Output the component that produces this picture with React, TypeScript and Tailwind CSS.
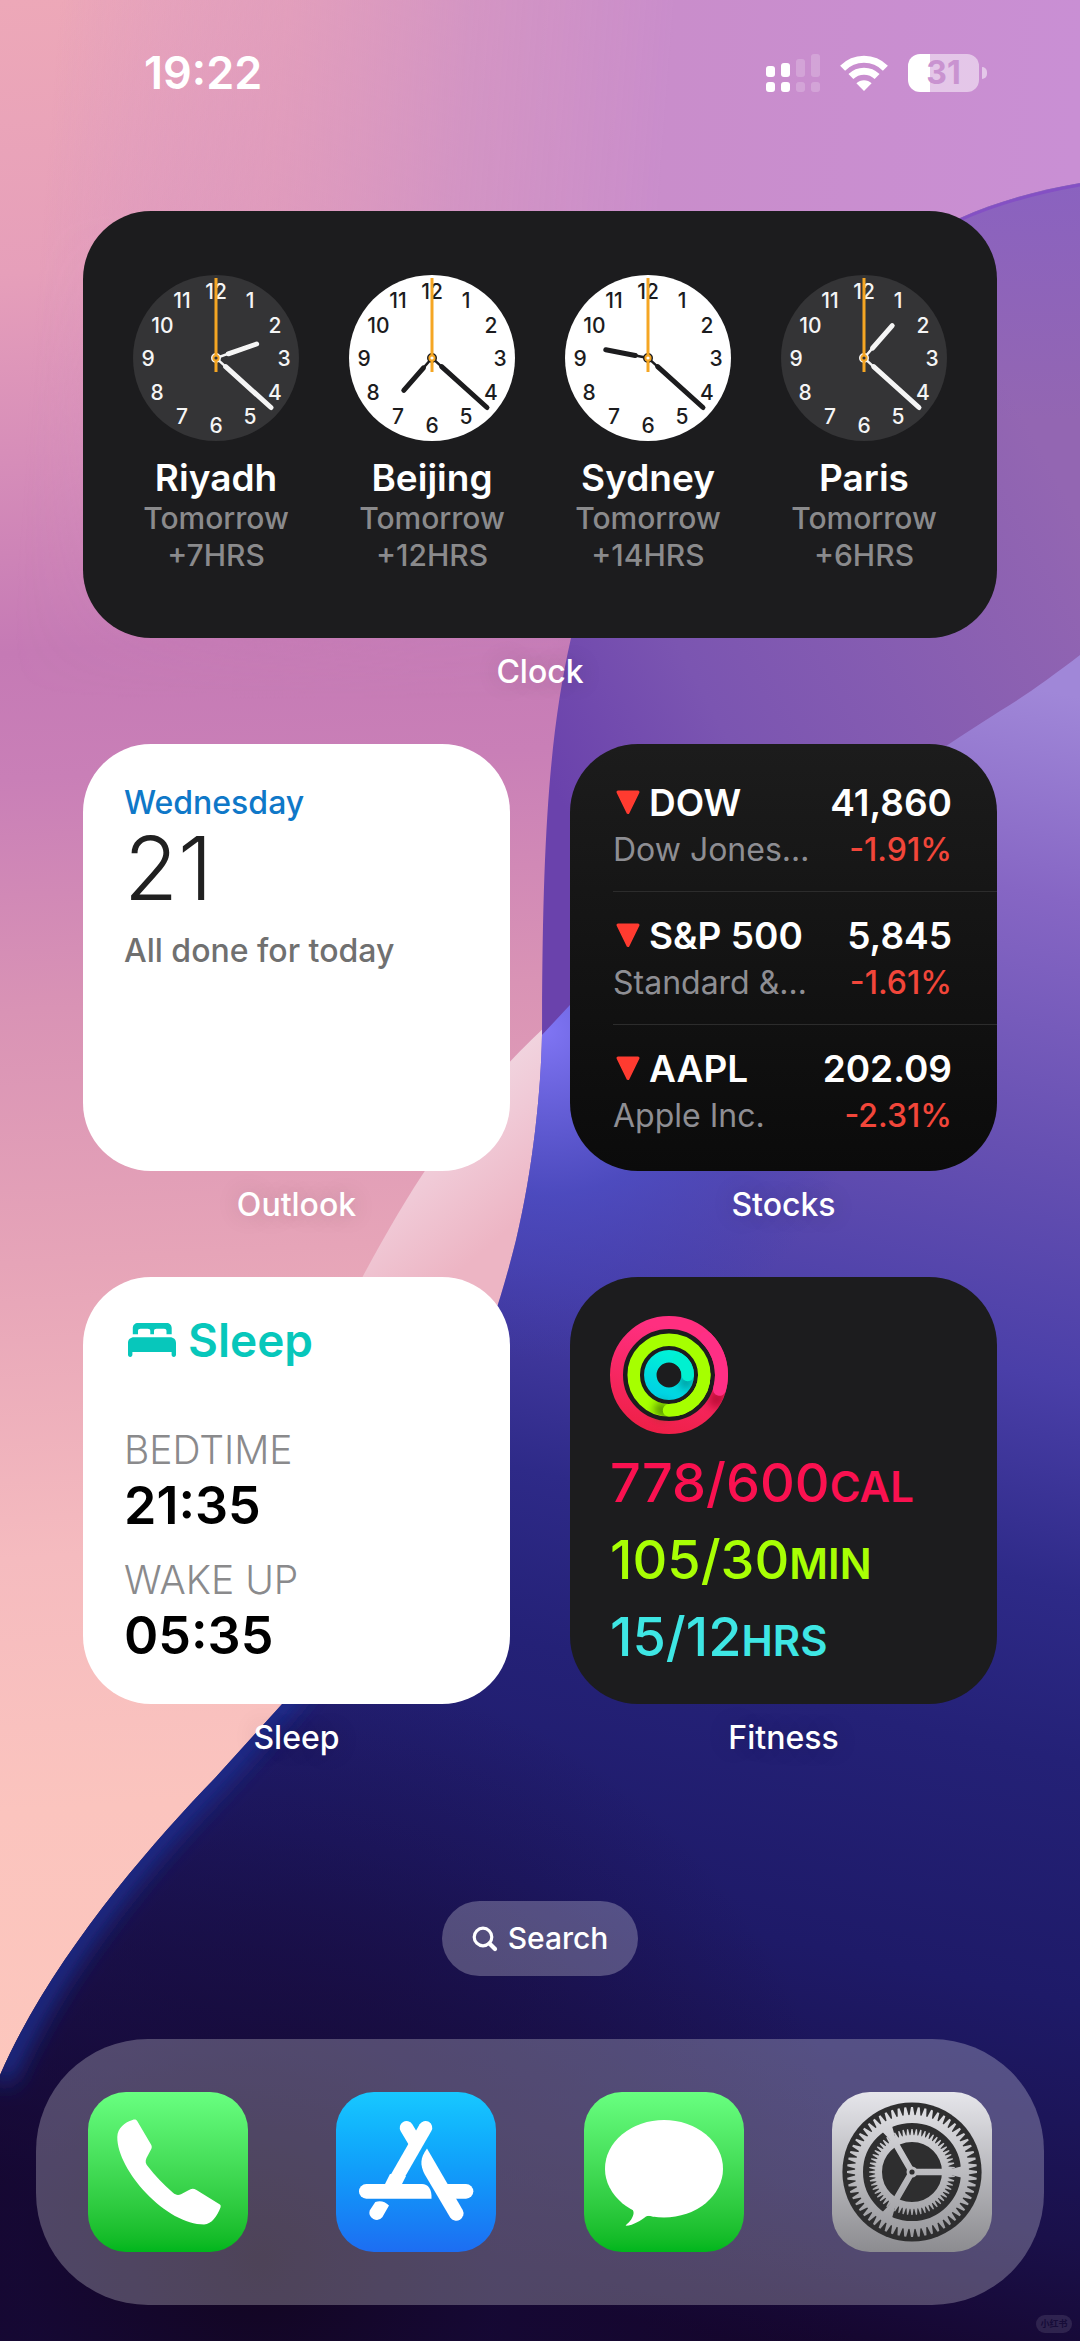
import type { ReactNode } from 'react'

type City = { name: string; offset: string; hour: number; night: boolean }

type Stock = { symbol: string; name: string; price: string; change: string }

const MINUTE = 22

const cities: City[] = [
  { name: 'Riyadh',  offset: '+7HRS',  hour: 2, night: true },
  { name: 'Beijing', offset: '+12HRS', hour: 7, night: false },
  { name: 'Sydney',  offset: '+14HRS', hour: 9, night: false },
  { name: 'Paris',   offset: '+6HRS',  hour: 1, night: true },
]

const stocks: Stock[] = [
  { symbol: 'DOW',     name: 'Dow Jones…',  price: '41,860', change: '-1.91%' },
  { symbol: 'S&P 500', name: 'Standard &…', price: '5,845',  change: '-1.61%' },
  { symbol: 'AAPL',    name: 'Apple Inc.',  price: '202.09', change: '-2.31%' },
]

const goals = [
  { value: '778/600', unit: 'CAL', color: 'text-[#fa1150]' },
  { value: '105/30',  unit: 'MIN', color: 'text-[#a8ff04]' },
  { value: '15/12',   unit: 'HRS', color: 'text-[#3ee6e4]' },
]

const range = (n: number) => Array.from({ length: n }, (_, i) => i)

function Wallpaper() {
  return (
    <svg
      className="absolute inset-0 h-full w-full"
      viewBox="0 0 1080 2341"
      preserveAspectRatio="none"
      aria-hidden="true"
    >
      <defs>
        <linearGradient id="pink" gradientUnits="userSpaceOnUse" x1="0" y1="0" x2="120" y2="2100">
          <stop offset="0" stopColor="#eda8b8" />
          <stop offset="0.13" stopColor="#e69fba" />
          <stop offset="0.22" stopColor="#d68db9" />
          <stop offset="0.31" stopColor="#c57ab5" />
          <stop offset="0.37" stopColor="#c97fb7" />
          <stop offset="0.48" stopColor="#d993b5" />
          <stop offset="0.6" stopColor="#e6a4b8" />
          <stop offset="0.74" stopColor="#f5bbbf" />
          <stop offset="0.86" stopColor="#fbc4be" />
          <stop offset="1" stopColor="#fdc7bd" />
        </linearGradient>
        <linearGradient id="orchid" gradientUnits="userSpaceOnUse" x1="60" y1="0" x2="1080" y2="80">
          <stop offset="0" stopColor="#c98dd0" stopOpacity="0" />
          <stop offset="0.22" stopColor="#d896c0" stopOpacity="0.5" />
          <stop offset="0.4" stopColor="#cf92c5" stopOpacity="0.85" />
          <stop offset="0.6" stopColor="#c98dcb" />
          <stop offset="1" stopColor="#c98fd4" />
        </linearGradient>
        <linearGradient id="fade" x1="0" y1="0" x2="0" y2="1">
          <stop offset="0" stopColor="#fff" />
          <stop offset="0.3" stopColor="#fff" />
          <stop offset="1" stopColor="#000" />
        </linearGradient>
        <mask id="topMask">
          <rect width="1080" height="700" fill="url(#fade)" />
        </mask>
        <linearGradient id="violet" gradientUnits="userSpaceOnUse" x1="560" y1="800" x2="1080" y2="520">
          <stop offset="0" stopColor="#6a42ac" />
          <stop offset="0.3" stopColor="#7b55b1" />
          <stop offset="1" stopColor="#9366b2" />
        </linearGradient>
        <linearGradient id="violetTop" gradientUnits="userSpaceOnUse" x1="0" y1="180" x2="0" y2="420">
          <stop offset="0" stopColor="#8a62c0" />
          <stop offset="1" stopColor="#8a62c0" stopOpacity="0" />
        </linearGradient>
        <linearGradient id="blue" gradientUnits="userSpaceOnUse" x1="1000" y1="680" x2="640" y2="2320">
          <stop offset="0" stopColor="#a087d8" />
          <stop offset="0.12" stopColor="#8666c4" />
          <stop offset="0.27" stopColor="#6650b2" />
          <stop offset="0.4" stopColor="#4a3fa8" />
          <stop offset="0.52" stopColor="#2e2a88" />
          <stop offset="0.62" stopColor="#242177" />
          <stop offset="0.76" stopColor="#1e1a68" />
          <stop offset="0.9" stopColor="#1a104a" />
          <stop offset="1" stopColor="#15052b" />
        </linearGradient>
        <radialGradient id="glow" gradientUnits="userSpaceOnUse" cx="545" cy="1030" r="330">
          <stop offset="0" stopColor="#8075f4" />
          <stop offset="0.5" stopColor="#4a4cc4" stopOpacity="0.75" />
          <stop offset="1" stopColor="#3a3cb0" stopOpacity="0" />
        </radialGradient>
        <radialGradient id="shade" gradientUnits="userSpaceOnUse" cx="260" cy="2260" r="600">
          <stop offset="0" stopColor="#12051f" stopOpacity="0.9" />
          <stop offset="0.4" stopColor="#160a38" stopOpacity="0.65" />
          <stop offset="1" stopColor="#160a38" stopOpacity="0" />
        </radialGradient>
        <linearGradient id="ribbon" gradientUnits="userSpaceOnUse" x1="410" y1="1090" x2="520" y2="1220">
          <stop offset="0" stopColor="#f1dce5" />
          <stop offset="0.5" stopColor="#f0c9d6" />
          <stop offset="1" stopColor="#edb5c4" />
        </linearGradient>
        <filter id="soft" x="-20%" y="-20%" width="140%" height="140%">
          <feGaussianBlur stdDeviation="12" />
        </filter>
        <clipPath id="wave">
          <path d="M1080 655C1050 678 1025 696 1000 711C860 800 700 920 570 1005L542 1035C541 1090 533 1170 516 1240C490 1345 430 1520 283 1703L215 1778C150 1845 50 1960 0 2075V2341H1080Z" />
        </clipPath>
      </defs>

      <rect width="1080" height="2341" fill="url(#pink)" />
      <rect width="1080" height="700" fill="url(#orchid)" mask="url(#topMask)" />
      <path d="M570 1005C480 1080 420 1170 363 1276L300 1400H540Z" fill="url(#ribbon)" />

      <path
        d="M1080 183C1040 190 1000 200 960 218C760 320 600 470 571 638C548 740 542 850 542 1050H620L1080 760Z"
        fill="url(#violet)"
      />
      <path
        d="M1080 183C1040 190 1000 200 960 218C760 320 600 470 571 638H1080Z"
        fill="url(#violetTop)"
      />
      <path
        d="M1080 185C1040 192 1000 202 960 220"
        fill="none"
        stroke="#8450c4"
        strokeWidth="3"
      />

      <g clipPath="url(#wave)">
        <rect width="1080" height="2341" fill="url(#blue)" />
        <rect width="1080" height="2341" fill="url(#glow)" />
        <rect width="1080" height="2341" fill="url(#shade)" />
        <path
          d="M470 1380C430 1500 370 1595 283 1703L215 1778C150 1845 50 1960 0 2080"
          fill="none"
          stroke="#1d3296"
          strokeWidth="22"
          filter="url(#soft)"
        />
      </g>
    </svg>
  )
}

function StatusBar() {
  return (
    <header className="flex h-[211px] items-start justify-between pt-[49px] pr-[93px] pl-[144px] text-white">
      <time className="text-[45px] leading-[48px] font-semibold">19:22</time>
      <div className="flex h-12 items-center gap-5">
        <svg width="54" height="38" viewBox="0 0 54 38" fill="#fff" aria-label="Signal">
          <rect x="0" y="12" width="9" height="11" rx="3" />
          <rect x="15" y="9" width="9" height="14" rx="3" />
          <rect x="30" y="5" width="9" height="18" rx="3" opacity="0.2" />
          <rect x="45" y="0" width="9" height="23" rx="3" opacity="0.2" />
          <rect x="0" y="28" width="9" height="10" rx="3" />
          <rect x="15" y="28" width="9" height="10" rx="3" />
          <rect x="30" y="28" width="9" height="10" rx="3" opacity="0.2" />
          <rect x="45" y="28" width="9" height="10" rx="3" opacity="0.2" />
        </svg>
        <svg width="48" height="36" viewBox="0 0 48 36" aria-label="Wi-Fi">
          <g fill="none" stroke="#fff" strokeWidth="7">
            <path d="M2.6 13.2C14.4 1.2 33.6 1.2 45.4 13.2" />
            <path d="M10.9 21.6C18.2 14.4 29.8 14.4 37.1 21.6" />
          </g>
          <path d="M24 36L16.4 28.2C20.6 24.1 27.4 24.1 31.6 28.2Z" fill="#fff" />
        </svg>
        <div className="flex items-center gap-[3px]">
          <div className="flex h-[38px] w-[71px] items-center justify-center rounded-[12px] bg-linear-to-r from-white from-31% to-white/50 to-31% text-[32px] leading-none font-bold text-[#c993d0]">
            31
          </div>
          <span className="h-3 w-[5px] rounded-r-full bg-white/50" />
        </div>
      </div>
    </header>
  )
}

function ClockFace({ hour, night }: { hour: number; night: boolean }) {
  const ink = night ? '#f5f5f5' : '#1c1c1e'
  const hands = [
    { angle: hour * 30 + MINUTE / 2, length: 45 },
    { angle: MINUTE * 6, length: 76 },
  ]

  return (
    <svg width="166" height="166" viewBox="-83 -83 166 166" aria-hidden="true">
      <circle r="83" fill={night ? '#343436' : '#fff'} />
      {range(12).map(i => {
        const a = ((i + 1) * Math.PI) / 6
        const r = i === 9 ? 62 : 68
        return (
          <text
            key={i}
            x={Math.sin(a) * r}
            y={-Math.cos(a) * 67 + 8}
            textAnchor="middle"
            fontSize="21"
            fontWeight="500"
            fill={ink}
          >
            {i + 1}
          </text>
        )
      })}
      {hands.map(h => (
        <g key={h.length} transform={`rotate(${h.angle})`} stroke={ink} strokeLinecap="round">
          <line y1="-4" y2="-14" strokeWidth="2.5" />
          <line y1="-13" y2={-h.length + 2} strokeWidth="5" />
        </g>
      ))}
      <circle r="4" fill={night ? '#343436' : '#fff'} stroke={ink} strokeWidth="2" />
      <line y1="-80" y2="14" stroke="#f5a623" strokeWidth="3" />
      <circle r="2.6" fill={night ? '#343436' : '#fff'} stroke="#f5a623" strokeWidth="2" />
    </svg>
  )
}

function Widget({ label, className, children }: { label: string; className: string; children: ReactNode }) {
  return (
    <section className="flex flex-col" aria-label={label}>
      <div className={`h-[427px] overflow-hidden rounded-[68px] ${className}`}>{children}</div>
      <p className="text-center text-[32px] leading-[68px] font-medium text-white [text-shadow:0_0_24px_rgba(0,0,0,0.2)]">
        {label}
      </p>
    </section>
  )
}

function ClockWidget() {
  return (
    <Widget label="Clock" className="bg-[#1c1c1e] px-[25px] pt-16">
      <div className="grid grid-cols-4">
        {cities.map(c => (
          <div key={c.name} className="flex flex-col items-center text-center">
            <ClockFace hour={c.hour} night={c.night} />
            <h2 className="mt-[15px] text-[37px] leading-[44px] font-semibold text-white">{c.name}</h2>
            <p className="text-[30px] leading-[37px] font-medium text-[#8a8a8c]">Tomorrow</p>
            <p className="text-[30px] leading-[37px] font-medium text-[#8a8a8c]">{c.offset}</p>
          </div>
        ))}
      </div>
    </Widget>
  )
}

function OutlookWidget() {
  return (
    <Widget label="Outlook" className="bg-white px-[41px] pt-10">
      <p className="text-[32px] leading-[38px] font-medium text-[#0f78c8]">Wednesday</p>
      <p className="text-[88px] leading-[92px] font-light text-[#202020]">21</p>
      <p className="mt-[18px] text-[32px] leading-[38px] font-medium text-[#707070]">All done for today</p>
    </Widget>
  )
}

function StocksWidget() {
  return (
    <Widget label="Stocks" className="bg-linear-to-b from-[#1c1c1c] to-[#0b0b0b] pt-[15px] pl-[43px]">
      <ul className="divide-y divide-[#2c2c2c]">
        {stocks.map(s => (
          <li key={s.symbol} className="pt-[21px] pr-[45px] pb-[17px] whitespace-nowrap">
            <div className="flex items-center justify-between text-[37px] leading-[46px] font-semibold text-white">
              <span className="flex items-center gap-2">
                <svg width="28" height="28" viewBox="0 0 28 28" aria-hidden="true">
                  <path
                    d="M5 3H25L15 23.500Z"
                    fill="#ff3b30"
                    stroke="#ff3b30"
                    strokeWidth="3"
                    strokeLinejoin="round"
                  />
                </svg>
                {s.symbol}
              </span>
              <span>{s.price}</span>
            </div>
            <div className="flex items-center justify-between text-[32px] leading-[48px]">
              <span className="text-[#8e8e93]">{s.name}</span>
              <span className="font-medium text-[#f2463a]">{s.change}</span>
            </div>
          </li>
        ))}
      </ul>
    </Widget>
  )
}

function SleepWidget() {
  return (
    <Widget label="Sleep" className="bg-white px-[41px] pt-[35px]">
      <h2 className="flex items-center gap-3 text-[46px] leading-[56px] font-semibold text-[#07c7bb]">
        <svg className="ml-1" width="48" height="34" viewBox="0 0 48 34" fill="currentColor" aria-hidden="true">
          <path d="M10 0H38.500C41.500 0 43.700 2 43.700 5V11.300H38.500V8C38.500 6.500 37.500 5.700 36 5.700H28.500C27 5.700 26 6.500 26 8V11.300H22.300V8C22.300 6.500 21.300 5.700 19.800 5.700H12.500C11 5.700 10 6.500 10 8V11.300H4.800V5C4.800 2 7 0 10 0Z" />
          <path d="M6 14.300H42C45.500 14.300 48 16.500 48 20V31.800C48 33 47.200 34 45.800 34C44.400 34 43.600 33 43.600 31.800V29H4.400V31.800C4.400 33 3.600 34 2.200 34C.8 34 0 33 0 31.800V20C0 16.500 2.500 14.300 6 14.300Z" />
        </svg>
        Sleep
      </h2>
      <p className="mt-[58px] text-[39px] leading-[48px] font-light text-[#8a8a8c]">BEDTIME</p>
      <p className="text-[52px] leading-[64px] font-semibold text-black">21:35</p>
      <p className="mt-[18px] text-[39px] leading-[48px] font-light text-[#8a8a8c]">WAKE UP</p>
      <p className="text-[52px] leading-[64px] font-semibold text-black">05:35</p>
    </Widget>
  )
}

function ActivityRings() {
  return (
    <svg width="118" height="118" viewBox="-59 -59 118 118" fill="none" aria-hidden="true">
      <defs>
        <linearGradient id="move" x1="0" y1="1" x2="0.25" y2="0">
          <stop offset="0" stopColor="#ee1f45" />
          <stop offset="1" stopColor="#ff2f80" />
        </linearGradient>
        <linearGradient id="stand" x1="0.2" y1="1" x2="0.6" y2="0">
          <stop offset="0" stopColor="#00d2e4" />
          <stop offset="1" stopColor="#00f0d8" />
        </linearGradient>
        <filter id="capShadow" x="-100%" y="-100%" width="300%" height="300%">
          <feGaussianBlur stdDeviation="4" />
        </filter>
        <clipPath id="ringClip">
          <path
            clipRule="evenodd"
            d="M0-59A59 59 0 1 1 0 59A59 59 0 1 1 0-59ZM0-46A46 46 0 1 0 0 46A46 46 0 1 0 0-46ZM0-41.500A41.500 41.500 0 1 1 0 41.500A41.500 41.500 0 1 1 0-41.500ZM0-29A29 29 0 1 0 0 29A29 29 0 1 0 0-29ZM0-25A25 25 0 1 1 0 25A25 25 0 1 1 0-25ZM0-12.500A12.500 12.500 0 1 0 0 12.500A12.500 12.500 0 1 0 0-12.500Z"
          />
        </clipPath>
      </defs>
      <circle r="52.5" stroke="url(#move)" strokeWidth="13" />
      <circle r="35.3" stroke="#a6ff00" strokeWidth="12.5" />
      <circle r="18.7" stroke="url(#stand)" strokeWidth="12.5" />
      {/* shadows under the leading end of each ring */}
      <g clipPath="url(#ringClip)">
        <circle cx="48" cy="24" r="9" fill="#a00020" opacity="0.65" filter="url(#capShadow)" />
        <circle cx="-7" cy="35" r="8" fill="#3a6a00" opacity="0.7" filter="url(#capShadow)" />
        <circle cx="17" cy="7" r="7" fill="#007a88" opacity="0.7" filter="url(#capShadow)" />
      </g>
      <g strokeLinecap="round">
        <path d="M37.100-37.100A52.500 52.500 0 0 1 50.500 14.300" stroke="#ff2f85" strokeWidth="13" />
        <path d="M35.300 0A35.300 35.300 0 0 1 0 35.300" stroke="#a6ff00" strokeWidth="12.5" />
        <path d="M10-15.800A18.700 18.700 0 0 1 18.700 0" stroke="#00f0d0" strokeWidth="12.5" />
      </g>
    </svg>
  )
}

function FitnessWidget() {
  return (
    <Widget label="Fitness" className="bg-[#1c1c1e] px-10 pt-[39px]">
      <ActivityRings />
      <div className="mt-2.5">
        {goals.map(g => (
          <p key={g.unit} className={`text-[54px] leading-[77px] font-medium ${g.color}`}>
            {g.value}
            <span className="text-[42px] leading-none font-semibold">{g.unit}</span>
          </p>
        ))}
      </div>
    </Widget>
  )
}

function PhoneIcon() {
  return (
    <svg viewBox="0 0 160 160" className="w-full" fill="#fff" aria-hidden="true">
      <path d="M44.500 28C37 30 29.500 36 29.300 45C29 62 42 84 58 101C76 120 98 132.500 116 132.500C124 132 129 124 132.500 115.500C133 113.500 132.500 113 131.500 112.300L108.500 98C105.500 96.200 103 96.500 100.500 98.300L93 102.300C90 103.500 87.500 103 85 100.800C75 92 67 83.500 60 74.500C57.500 71.500 57 69.500 58.500 66L63 57.500C64 55.500 64 54.300 63 52.500L49.500 29.500C48.200 27.500 47 27.200 44.500 28Z" />
    </svg>
  )
}

function AppStoreIcon() {
  return (
    <svg viewBox="0 0 160 160" className="w-full" fill="#fff" aria-hidden="true">
      <g stroke="#fff" strokeWidth="13.500" strokeLinecap="round">
        <path d="M70.500 35.700L79 50" />
        <path d="M89.500 35.700L60 87" />
      </g>
      <path d="M54 82L48 94H65L70 84Z" />
      <path d="M30.300 92H86C92 92 96 97 95.500 106.700H30.300A7.350 7.350 0 0 1 30.300 92Z" />
      <path d="M108 92H130A7.350 7.350 0 0 1 130 106.700H113Z" />
      <path d="M91 56.500L126.700 118A7.300 7.300 0 0 1 114.200 125.500L88.500 82C84 73 84 66 91 56.500Z" />
      <path d="M39.300 110Q47 107.500 53 113.500L46.300 125.200A7.300 7.300 0 0 1 33.700 118.500Z" />
    </svg>
  )
}

function MessagesIcon() {
  return (
    <svg viewBox="0 0 160 160" className="w-full" fill="#fff" aria-hidden="true">
      <ellipse cx="80" cy="76.700" rx="59" ry="48.700" />
      <path d="M43 112C51 118 50.500 121 48 126C46 130 42 132.500 41.700 133.700C50 133.500 57 128 62 124.500C64 123.200 66 123.500 70 124.500L76 110Z" />
    </svg>
  )
}

function SettingsIcon() {
  return (
    <svg viewBox="-80 -80 160 160" className="w-full" aria-hidden="true">
      <defs>
        <linearGradient id="steel" gradientUnits="userSpaceOnUse" x1="0" y1="-66" x2="0" y2="66">
          <stop offset="0" stopColor="#e0e0e4" />
          <stop offset="1" stopColor="#98989c" />
        </linearGradient>
        <mask id="gear">
          {range(60).map(i => (
            <g key={i} transform={`rotate(${i * 6})`} fill="#fff">
              <path d="M-2.600-56L-1-65H1L2.600-56Z" />
              <path d="M-1.700-36L-.6-43H.6L1.700-36Z" />
            </g>
          ))}
          <g fill="none" stroke="#fff">
            <circle r="53" strokeWidth="8" />
            <circle r="33.500" strokeWidth="7" />
          </g>
          {[0, 120, 240].map(a => (
            <g key={a} transform={`rotate(${a})`} fill="#fff">
              <path d="M0-3.200H40L51-6V6L40 3.200H0Z" />
            </g>
          ))}
          <circle r="5.500" fill="#fff" />
          <circle r="2.600" fill="#000" />
        </mask>
      </defs>
      <circle r="69.600" fill="#2e2e2f" />
      <rect x="-70" y="-70" width="140" height="140" fill="url(#steel)" mask="url(#gear)" />
    </svg>
  )
}

const apps = [
  { name: 'Phone',     bg: 'bg-linear-to-b from-[#68ff80] to-[#00b61c]', icon: <PhoneIcon /> },
  { name: 'App Store', bg: 'bg-linear-to-b from-[#18c8ff] to-[#1d6df2]', icon: <AppStoreIcon /> },
  { name: 'Messages',  bg: 'bg-linear-to-b from-[#68ff80] to-[#00b61c]', icon: <MessagesIcon /> },
  { name: 'Settings',  bg: 'bg-linear-to-b from-[#e6e6eb] to-[#8c8c90]', icon: <SettingsIcon /> },
]

export default function App() {
  return (
    <div className="relative min-h-screen overflow-hidden bg-[#1a104a] font-[Inter,'Liberation_Sans',sans-serif]">
      <Wallpaper />

      <div className="relative flex min-h-screen flex-col">
        <StatusBar />

        <main className="flex flex-col gap-[38px] px-[83px]">
          <ClockWidget />
          <div className="grid grid-cols-2 gap-x-[60px] gap-y-[38px]">
            <OutlookWidget />
            <StocksWidget />
            <SleepWidget />
            <FitnessWidget />
          </div>
        </main>

        <button
          type="button"
          className="mx-auto mt-[129px] flex h-[75px] items-center gap-2.5 rounded-full bg-white/25 px-[30px] text-[30px] font-medium text-white"
        >
          <svg width="26" height="26" viewBox="0 0 26 26" fill="none" stroke="#fff" strokeLinecap="round" aria-hidden="true">
            <circle cx="11" cy="11" r="8.800" strokeWidth="3.200" />
            <path d="M17.500 17.500L23 23" strokeWidth="4.200" />
          </svg>
          Search
        </button>

        <nav className="mx-9 mt-[63px] mb-[35px] flex justify-between rounded-[112px] bg-white/25 px-[52px] py-[53px]">
          {apps.map(a => (
            <a
              key={a.name}
              href="#"
              aria-label={a.name}
              className={`flex size-40 items-center justify-center rounded-[38px] ${a.bg}`}
            >
              {a.icon}
            </a>
          ))}
        </nav>
      </div>

      <span className="absolute right-2 bottom-2 flex h-[18px] w-9 items-center justify-center rounded-full bg-white/10 font-['Noto_Sans_CJK_SC',sans-serif] text-[9px] font-bold whitespace-nowrap text-[#160c38]">
        小红书
      </span>
    </div>
  )
}
